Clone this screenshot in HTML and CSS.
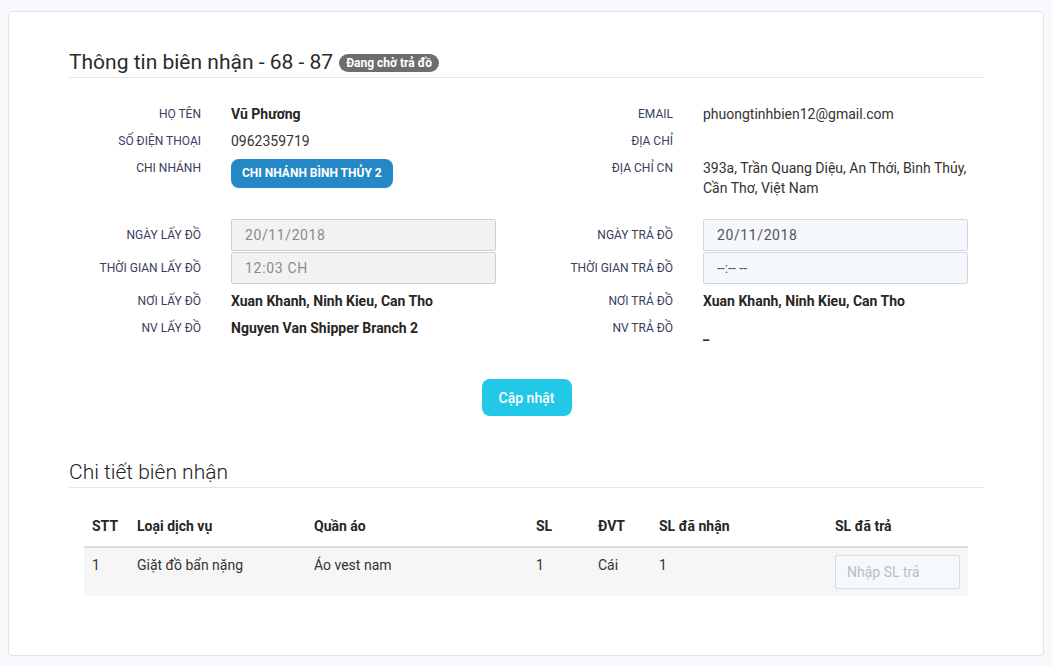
FILE: index.html
```html
<!DOCTYPE html>
<html lang="vi">
<head>
<meta charset="utf-8">
<title>Thông tin biên nhận</title>
<link rel="stylesheet" href="styles.css">
</head>
<body>
<div class="card">
  <h2 class="section-title">Thông tin biên nhận - 68 - 87 <span class="badge">Đang chờ trả đồ</span></h2>

  <div class="pair">
    <div class="field"><div class="label">Họ tên</div><div class="value strong">Vũ Phương</div></div>
    <div class="field"><div class="label">Email</div><div class="value">phuongtinhbien12@gmail.com</div></div>
  </div>
  <div class="pair">
    <div class="field"><div class="label">Số điện thoại</div><div class="value">0962359719</div></div>
    <div class="field"><div class="label">Địa chỉ</div><div class="value"></div></div>
  </div>
  <div class="pair">
    <div class="field"><div class="label">Chi nhánh</div><div class="value"><span class="branch-btn">CHI NHÁNH BÌNH THỦY 2</span></div></div>
    <div class="field"><div class="label">Địa chỉ CN</div><div class="value">393a, Trần Quang Diệu, An Thới, Bình Thủy, Cần Thơ, Việt Nam</div></div>
  </div>

  <div class="pair inputs first-inputs">
    <div class="field"><div class="label">Ngày lấy đồ</div><div class="value"><div class="input disabled date">20/11/2018</div></div></div>
    <div class="field"><div class="label">Ngày trả đồ</div><div class="value"><div class="input date">20/11/2018</div></div></div>
  </div>
  <div class="pair inputs">
    <div class="field"><div class="label">Thời gian lấy đồ</div><div class="value"><div class="input disabled time">12:03 CH</div></div></div>
    <div class="field"><div class="label">Thời gian trả đồ</div><div class="value"><div class="input">--:-- --</div></div></div>
  </div>
  <div class="pair after-inputs">
    <div class="field"><div class="label">Nơi lấy đồ</div><div class="value strong">Xuan Khanh, Ninh Kieu, Can Tho</div></div>
    <div class="field"><div class="label">Nơi trả đồ</div><div class="value strong">Xuan Khanh, Ninh Kieu, Can Tho</div></div>
  </div>
  <div class="pair">
    <div class="field"><div class="label">NV lấy đồ</div><div class="value strong">Nguyen Van Shipper Branch 2</div></div>
    <div class="field"><div class="label">NV trả đồ</div><div class="value strong dash">_</div></div>
  </div>

  <div class="actions"><button class="update-btn">Cập nhật</button></div>

  <h2 class="section-title second">Chi tiết biên nhận</h2>

  <div class="table-wrap">
    <table class="detail-table">
      <colgroup>
        <col class="c1"><col class="c2"><col class="c3"><col class="c4"><col class="c5"><col class="c6"><col class="c7">
      </colgroup>
      <thead>
        <tr><th>STT</th><th>Loại dịch vụ</th><th>Quần áo</th><th>SL</th><th>ĐVT</th><th>SL đã nhận</th><th>SL đã trả</th></tr>
      </thead>
      <tbody>
        <tr><td>1</td><td>Giặt đồ bẩn nặng</td><td>Áo vest nam</td><td>1</td><td>Cái</td><td>1</td><td><div class="qty-input">Nhập SL trả</div></td></tr>
      </tbody>
    </table>
  </div>
</div>
</body>
</html>
```

FILE: styles.css
```css
* { box-sizing: border-box; }
html, body { margin: 0; padding: 0; }
body {
  background: #f8f9fc;
  font-family: Roboto, "Noto Sans", "Liberation Sans", sans-serif;
  color: #333;
  font-size: 14px;
  padding: 11px 8px 10px 8px;
}
.card {
  background: #fff;
  border: 1px solid #e2e3e6;
  border-radius: 4px;
  padding: 38px 59px 60px 60px;
  height: 645px;
}
.section-title {
  margin: 0 0 26px 0;
  font-size: 21px;
  font-weight: 400;
  line-height: 24px;
  color: #2b2b2b;
  padding-bottom: 3px;
  border-bottom: 1px solid #e6e6e6;
  display: flex;
  align-items: center;
  gap: 6px;
}
.section-title.second { margin-top: 44px; margin-bottom: 0; font-weight: 300; color: #222; }
.badge {
  background: #6d6d6d;
  color: #fff;
  font-size: 12px;
  font-weight: 700;
  line-height: 18px;
  padding: 0 7px;
  border-radius: 9px;
  margin-top: 1px;
}
.pair {
  display: flex;
  gap: 45px;
  margin-bottom: 7px;
}
.field {
  width: 427px;
  display: grid;
  grid-template-columns: 132px 265px;
  column-gap: 30px;
  align-items: start;
}
.label {
  text-align: right;
  text-transform: uppercase;
  font-size: 12px;
  line-height: 20px;
  color: #3a3d5c;
}
.value {
  line-height: 20px;
  font-size: 14px;
  color: #333;
}
.value.strong { font-weight: 700; color: #262626; }
.value.dash { padding-top: 6px; }
.branch-btn {
  display: inline-block;
  background: #2388c5;
  color: #fff;
  font-size: 12px;
  font-weight: 700;
  line-height: 29px;
  padding: 0 11px;
  border-radius: 8px;
  margin-top: 1px;
}
.pair.first-inputs { margin-top: 21px; }
.pair.inputs { margin-bottom: 1px; }
.pair.inputs .field { align-items: center; }
.pair.after-inputs { margin-top: 7px; }
.input {
  height: 32px;
  border: 1px solid #d3d7dd;
  border-radius: 2px;
  background: #f4f7fb;
  color: #555;
  padding: 0 13px;
  line-height: 30px;
  font-size: 14px;
}
.input.date { letter-spacing: 0.6px; }
.input.time { letter-spacing: 0.7px; }
.input.disabled { background: #f2f2f2; color: #8a8a8a; border-color: #cfcfcf; }
.actions {
  display: flex;
  justify-content: center;
  margin-top: 35px;
}
.update-btn {
  background: #21c8e8;
  border: none;
  color: #fff;
  font-family: Roboto, "Noto Sans", sans-serif;
  font-size: 14px;
  font-weight: 500;
  width: 90px;
  height: 37px;
  border-radius: 8px;
}
.table-wrap { padding: 16px 16px 0 15px; }
.detail-table {
  width: 100%;
  border-collapse: collapse;
  table-layout: fixed;
}
col.c1 { width: 45px; }
col.c2 { width: 177px; }
col.c3 { width: 222px; }
col.c4 { width: 62px; }
col.c5 { width: 61px; }
col.c6 { width: 176px; }
col.c7 { width: 141px; }
.detail-table th {
  text-align: left;
  font-weight: 700;
  font-size: 14px;
  line-height: 20px;
  padding: 12px 8px 10px 8px;
  border-bottom: 2px solid #dcdcdc;
  color: #262626;
}
.detail-table td {
  padding: 7px 8px 7px 8px;
  vertical-align: top;
  line-height: 20px;
  background: #f6f6f6;
  color: #333;
}
.qty-input {
  width: 125px;
  height: 34px;
  border: 1px solid #d5dbe3;
  background: #f6f9fc;
  border-radius: 2px;
  color: #b9bec6;
  padding: 0 11px;
  line-height: 32px;
}
```
